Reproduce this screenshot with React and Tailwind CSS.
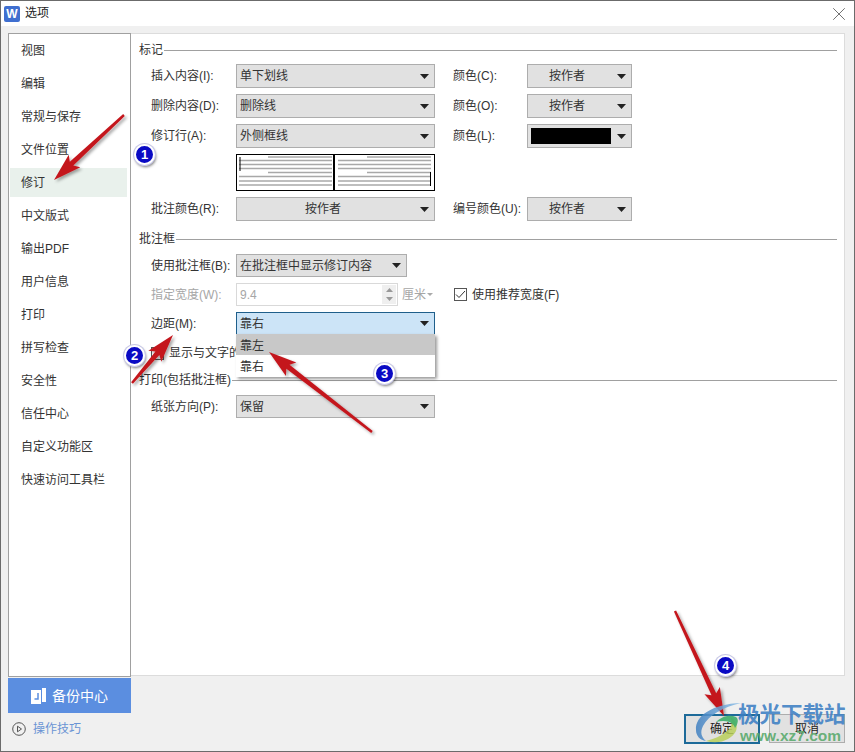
import React from 'react';
import { X } from 'lucide-react';

const navItems = ['视图', '编辑', '常规与保存', '文件位置', '修订', '中文版式', '输出PDF', '用户信息', '打印', '拼写检查', '安全性', '信任中心', '自定义功能区', '快速访问工具栏'];

const Caret = ({ muted }) => (
  <svg width="9" height="5" viewBox="0 0 9 5" className="shrink-0">
    <path d="M0 0h9L4.500 5z" fill={muted ? '#aaa' : '#222'} />
  </svg>
);

const Combo = ({ children, className = '', center }) => (
  <div className={`flex items-center h-full border border-[#adadad] bg-[#e1e1e1] pl-[3px] pr-[5px] ${className}`}>
    <span className={`flex-1 truncate ${center ? 'text-center pr-[14px]' : ''}`}>{children}</span>
    <Caret />
  </div>
);

const Label = ({ children, className = '' }) => (
  <span className={`w-[85px] shrink-0 ${className}`}>{children}</span>
);

const SideLabel = ({ children }) => (
  <span className="w-[92px] pl-[18px] shrink-0 whitespace-nowrap">{children}</span>
);

const Section = ({ title, className = '' }) => (
  <div className={`flex items-center h-4 pr-[7px] ${className}`}>
    <span>{title}</span>
    <span className="flex-1 h-px bg-[#a0a0a0] ml-px" />
  </div>
);

const Row = ({ label, className = '', children }) => (
  <div className={`flex items-center pl-3 ${className}`}>
    <Label>{label}</Label>
    {children}
  </div>
);

const Preview = () => (
  <svg width="199" height="37" viewBox="0 0 199 37" className="block">
    <rect x="0.5" y="0.5" width="198" height="36" fill="#fff" stroke="#000" />
    <path d="M98 0v37" stroke="#000" strokeWidth="2" />
    {[3, 6.5, 10.5, 14.5, 18.5, 22.5, 27, 31].map((y, i) => (
      <g key={y} stroke="#a8a8a8" strokeWidth="1.6">
        <path d={`M${i === 0 || i === 4 ? 32 : 3} ${y}H96`} />
        <path d={`M${i === 0 || i === 4 ? 131 : 102} ${y}H195`} />
      </g>
    ))}
    <path d="M4 3v14M194.500 18v14" stroke="#000" strokeWidth="1" />
  </svg>
);

const Arrow = ({ x1, y1, x2, y2 }) => {
  const len = Math.hypot(x2 - x1, y2 - y1);
  const ux = (x2 - x1) / len;
  const uy = (y2 - y1) / len;
  const nx = -uy;
  const ny = ux;
  const at = (along, side) => `${x1 + ux * along + nx * side},${y1 + uy * along + ny * side}`;
  const neck = len - 24;
  const pts = [at(0, -1.2), at(neck, -2.6), at(neck - 4, -8.5), at(len, 0), at(neck - 4, 8.5), at(neck, 2.6), at(0, 1.2)];
  return <polygon points={pts.join(' ')} fill="#c4191f" filter="url(#arrowShadow)" />;
};

const Badge = ({ n, className }) => (
  <div className={`absolute w-[21px] h-[21px] rounded-full bg-[#0a0ac4] border-2 border-white shadow-[1px_2px_3px_rgba(0,0,0,0.55)] ring-1 ring-[#c9c9e6] flex items-center justify-center text-white text-[13px] font-bold font-['Liberation_Sans',sans-serif] ${className}`}>
    {n}
  </div>
);

export default function App() {
  return (
    <div className="relative w-[855px] h-[752px] overflow-hidden flex flex-col bg-[#f0f0f0] border border-[#6b6b6b] text-[12px] leading-4 text-[#333] font-['Liberation_Sans','Noto_Sans_CJK_SC',sans-serif]">
      {/* Title bar */}
      <div className="h-[25px] shrink-0 bg-white flex items-center pl-[3px] pr-[4px]">
        <div className="w-[16px] h-[16px] rounded-[2px] bg-[#3f6fd0] text-white flex items-center justify-center text-[12px] font-bold">W</div>
        <span className="ml-[5px] mb-[2px] flex-1 text-[#222]">选项</span>
        <X size={22} strokeWidth={0.7} color="#222" />
      </div>

      {/* Body */}
      <div className="flex pl-[7px] pr-[9px] pt-[7px]">
        <div className="w-[123px] shrink-0 flex flex-col">
          <div className="h-[644px] bg-white border border-[#a0a0a0] px-px">
            {navItems.map((item) => (
              <div key={item} className="h-[33px] flex items-center py-[2px]">
                <div className={`w-[117px] h-full flex items-center pl-[11px] ${item === '修订' ? 'bg-[#e9f1ec]' : ''}`}>{item}</div>
              </div>
            ))}
          </div>
        </div>

        <div className="flex-1 h-[643px] bg-white border-t border-r border-b border-[#dcdcdc] pl-2 pt-2">
          <Section title="标记" />
          <div className="mt-[6px] flex flex-col gap-[6px]">
            <Row label="插入内容(I):" className="h-6">
              <Combo className="w-[199px]">单下划线</Combo>
              <SideLabel>颜色(C):</SideLabel>
              <Combo className="w-[105px]" center>按作者</Combo>
            </Row>
            <Row label="删除内容(D):" className="h-6">
              <Combo className="w-[199px]">删除线</Combo>
              <SideLabel>颜色(O):</SideLabel>
              <Combo className="w-[105px]" center>按作者</Combo>
            </Row>
            <Row label="修订行(A):" className="h-6">
              <Combo className="w-[199px]">外侧框线</Combo>
              <SideLabel>颜色(L):</SideLabel>
              <div className="w-[105px] h-full border border-[#adadad] bg-[#e1e1e1] flex items-center pl-[3px] pr-[5px]">
                <span className="w-[81px] h-4 bg-black mr-[6px]" />
                <Caret />
              </div>
            </Row>
            <Row label="" className="h-[37px]">
              <Preview />
            </Row>
            <Row label="批注颜色(R):" className="h-6">
              <Combo className="w-[199px]" center>按作者</Combo>
              <SideLabel>编号颜色(U):</SideLabel>
              <Combo className="w-[105px]" center>按作者</Combo>
            </Row>
          </div>

          <Section title="批注框" className="mt-[10px]" />
          <Row label="使用批注框(B):" className="h-[23px] mt-[7px]">
            <Combo className="w-[171px]">在批注框中显示修订内容</Combo>
          </Row>
          <Row label="指定宽度(W):" className="h-[23px] mt-[6px] text-[#a6a6a6]">
            <div className="w-[162px] h-full border border-[#d9d9d9] flex items-center pl-[3px] pr-px shrink-0">
              <span className="flex-1">9.4</span>
              <div className="w-[14px] h-[19px] bg-[#efefef] flex flex-col items-center justify-around">
                <svg width="7" height="4" viewBox="0 0 7 4"><path d="M0 4h7L3.500 0z" fill="#999" /></svg>
                <svg width="7" height="4" viewBox="0 0 7 4"><path d="M0 0h7L3.500 4z" fill="#999" /></svg>
              </div>
            </div>
            <span className="ml-[4px] w-[52px] shrink-0 flex items-center gap-px">
              厘米
              <svg width="6" height="3" viewBox="0 0 6 3"><path d="M0 0h6L3 3z" fill="#aaa" /></svg>
            </span>
            <span className="w-[13px] h-[13px] border border-[#555] bg-white flex items-center justify-center shrink-0">
              <svg width="11" height="9" viewBox="0 0 11 9"><path d="M1 4.500 4 7.500 10 1" fill="none" stroke="#333" /></svg>
            </span>
            <span className="ml-[5px] text-[#333]">使用推荐宽度(F)</span>
          </Row>
          <Row label="边距(M):" className="h-[23px] mt-[6px]">
            <div className="relative h-full w-[199px]">
              <div className="flex items-center h-full border border-[#1f5f8b] bg-[#cce4f7] pl-[3px] pr-[5px]">
                <span className="flex-1">靠右</span>
                <Caret />
              </div>
              <div className="absolute z-10 left-0 top-[22px] w-[199px] bg-white shadow-[2px_2px_3px_rgba(0,0,0,0.4)]">
                <div className="h-[21px] pl-[4px] pt-[2px] flex items-center bg-[#c8c8c8]">靠左</div>
                <div className="h-[22px] pl-[4px] pt-[2px] flex items-center">靠右</div>
              </div>
            </div>
          </Row>
          <div className="flex items-center pl-3 mt-[10px] h-4">
            <span className="w-[13px] h-[13px] border border-[#555] bg-white shrink-0" />
            <span className="ml-[5px]">显示与文字的连线</span>
          </div>
          <Section title="打印(包括批注框)" className="mt-[11px]" />
          <Row label="纸张方向(P):" className="h-[23px] mt-[7px]">
            <Combo className="w-[199px]">保留</Combo>
          </Row>
        </div>
      </div>

      {/* Footer */}
      <div className="flex pl-[7px] pr-[9px] flex-1">
        <div className="w-[123px] shrink-0">
          <div className="h-[35px] mt-px bg-[#5b8ee0] flex items-center justify-center gap-[6px] text-white text-[14px]">
            <svg width="15" height="16" viewBox="0 0 15 16">
              <path d="M0 2h10v14H0z" fill="#fff" />
              <path d="M11 0h4v14h-4z" fill="#fff" />
              <path d="M7 5v6H3.500" fill="none" stroke="#5b8ee0" strokeWidth="1.500" />
            </svg>
            <span>备份中心</span>
          </div>
          <div className="flex items-center mt-[8px] pl-[4px] gap-[7px] text-[#6a94d4]">
            <svg width="14" height="14" viewBox="0 0 14 14">
              <circle cx="7" cy="7" r="6.300" fill="none" stroke="#555" />
              <path d="M5.500 4.200 9.500 7l-4 2.800z" fill="none" stroke="#555" />
            </svg>
            <span>操作技巧</span>
          </div>
        </div>
        <div className="flex-1 flex justify-end items-start gap-[9px] pt-[37px]">
          <button className="w-[76px] h-[30px] border-2 border-[#1d6a99] bg-[#e1e1e1] text-[#222]">确定</button>
          <button className="w-[76px] h-[29px] border border-[#adadad] bg-[#e1e1e1] text-[#222]">取消</button>
        </div>
      </div>

      {/* Annotations laid over the screenshot */}
      <svg width="855" height="752" viewBox="0 0 855 752" className="absolute left-[-1px] top-[-1px] z-20 pointer-events-none">
        <defs>
          <filter id="arrowShadow" x="-30%" y="-30%" width="160%" height="160%">
            <feDropShadow dx="2" dy="2" stdDeviation="1.500" floodColor="#000" floodOpacity="0.35" />
          </filter>
          <linearGradient id="swooshBlue" x1="0" y1="0" x2="1" y2="0">
            <stop offset="0" stopColor="#3f7fc0" />
            <stop offset="1" stopColor="#8fc0e8" />
          </linearGradient>
        </defs>
        <Arrow x1={124} y1={115} x2={54} y2={180} />
        <Arrow x1={132} y1={383} x2={173} y2={335} />
        <Arrow x1={372} y1={432} x2={269} y2={352} />
        <Arrow x1={675} y1={611} x2={724} y2={716} />
        {/* watermark swoosh */}
        <path d="M741 703C712 704 695 716 696 730c0 6 4 10 10 11-5-4-6-9-3-15 6-11 20-19 38-23z" fill="url(#swooshBlue)" opacity="0.85" />
        <path d="M706 741c14 4 26-2 30-10 2-6 0-11-6-14 3 5 2 10-3 14-6 5-13 8-21 10z" fill="#b9cf5a" opacity="0.85" />
        <path d="M716 722c5-5 13-8 20-5 3 2 2 7-1 11-1-5-8-9-19-6z" fill="#3fae6a" opacity="0.9" />
      </svg>

      <div className="absolute z-20 left-[737px] top-[700px] text-[21.500px] leading-6 font-bold text-[#3d7fc4]/90 whitespace-nowrap font-['Noto_Sans_CJK_SC',sans-serif]">极光下载站</div>
      <div className="absolute z-20 left-[739px] top-[727px] text-[15.500px] leading-4 font-bold text-[#58a96c]/90 whitespace-nowrap">www.xz7.com</div>

      <Badge n="1" className="left-[133px] top-[143px] z-30" />
      <Badge n="2" className="left-[123px] top-[344px] z-30" />
      <Badge n="3" className="left-[373px] top-[362px] z-30" />
      <Badge n="4" className="left-[714px] top-[654px] z-30" />
    </div>
  );
}
